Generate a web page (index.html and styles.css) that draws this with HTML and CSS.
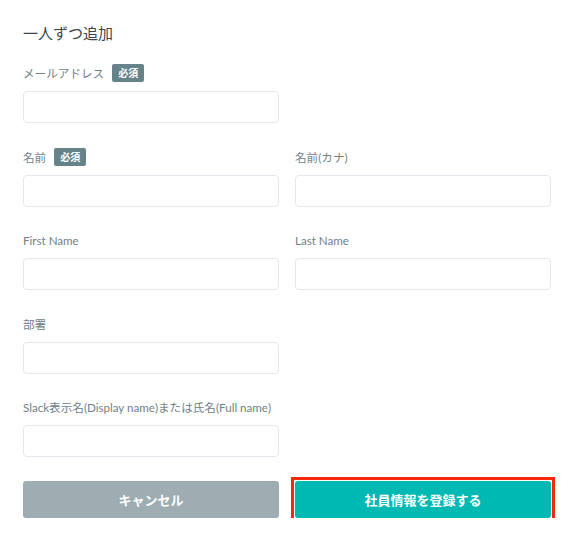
FILE: index.html
```html
<!DOCTYPE html>
<html lang="ja">
<head>
<meta charset="utf-8">
<link rel="stylesheet" href="styles.css">
</head>
<body>
<div class="page">
  <h2 class="title">一人ずつ追加</h2>
  <div class="form">
    <div class="field">
      <div class="label"><span>メールアドレス</span><span class="badge">必須</span></div>
      <div class="input"></div>
    </div>
    <div class="field"></div>
    <div class="field">
      <div class="label"><span>名前</span><span class="badge">必須</span></div>
      <div class="input"></div>
    </div>
    <div class="field">
      <div class="label"><span>名前(カナ)</span></div>
      <div class="input"></div>
    </div>
    <div class="field">
      <div class="label"><span>First Name</span></div>
      <div class="input"></div>
    </div>
    <div class="field">
      <div class="label"><span>Last Name</span></div>
      <div class="input"></div>
    </div>
    <div class="field">
      <div class="label"><span>部署</span></div>
      <div class="input"></div>
    </div>
    <div class="field"></div>
    <div class="field">
      <div class="label"><span>Slack表示名(Display name)または氏名(Full name)</span></div>
      <div class="input"></div>
    </div>
    <div class="field"></div>
    <button class="btn btn-cancel">キャンセル</button>
    <div class="focus-ring"><button class="btn btn-submit">社員情報を登録する</button></div>
  </div>
</div>
</body>
</html>
```
FILE: styles.css
```css
* { box-sizing: border-box; }
html, body {
  margin: 0;
  padding: 0;
  background: #ffffff;
}
body {
  font-family: "Lato", "Noto Sans CJK JP", sans-serif;
  color: #3e4a4f;
}
.page {
  width: 571px;
  padding: 23px 20px 0 23px;
}
.title {
  margin: 0 0 20px;
  font-size: 15px;
  line-height: 20px;
  font-weight: 400;
  color: #3b464b;
}
.form {
  display: grid;
  grid-template-columns: 256px 256px;
  column-gap: 16px;
}
.field {
  margin-bottom: 23.5px;
}
.label {
  display: flex;
  align-items: center;
  gap: 8px;
  height: 20px;
  margin-bottom: 8px;
  font-size: 11.6px;
  color: #6f8187;
}
.badge {
  display: inline-block;
  background: #66838a;
  color: #ffffff;
  font-size: 10px;
  font-weight: 700;
  line-height: 14px;
  padding: 2px 6px;
  border-radius: 2px;
}
.input {
  height: 32px;
  border: 1px solid #e4e8ee;
  border-radius: 4px;
  background: #ffffff;
}
.btn {
  display: block;
  width: 100%;
  height: 37px;
  border: none;
  border-radius: 3px;
  font-family: "Lato", "Noto Sans CJK JP", sans-serif;
  font-size: 13px;
  font-weight: 700;
  color: #ffffff;
  padding: 0;
}
.btn-cancel {
  background: #9eadb2;
}
.focus-ring {
  outline: 3px solid #f7290c;
  outline-offset: 1px;
}
.btn-submit {
  background: #00b9b2;
}
```
